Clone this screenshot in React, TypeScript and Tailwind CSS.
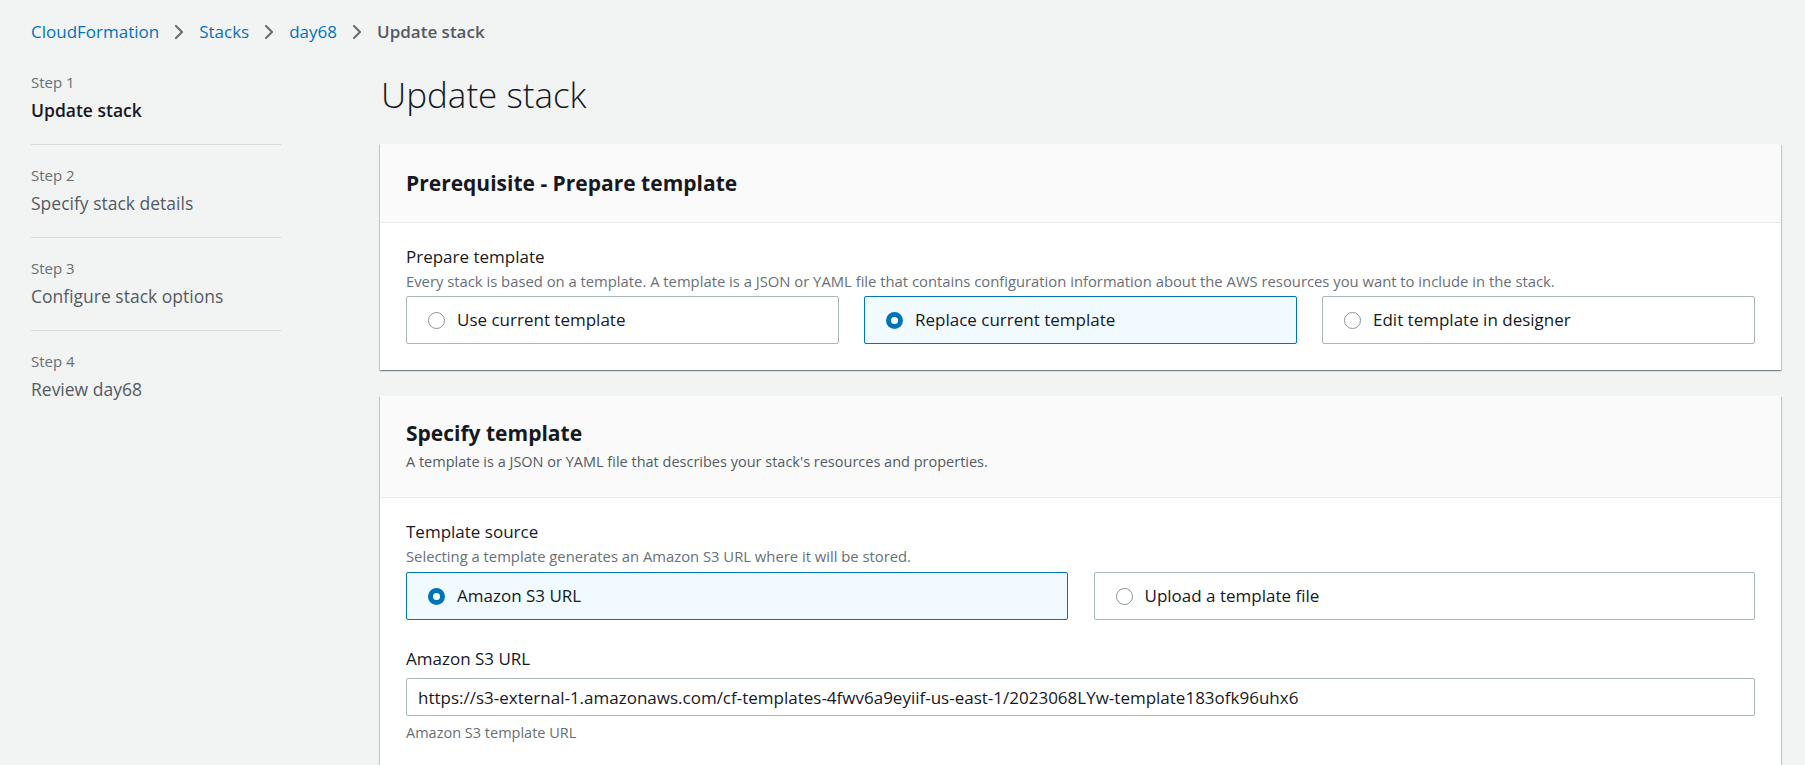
const steps = [
  { label: "Step 1", title: "Update stack", active: true },
  { label: "Step 2", title: "Specify stack details", active: false },
  { label: "Step 3", title: "Configure stack options", active: false },
  { label: "Step 4", title: "Review day68", active: false },
];

const Chevron = () => (
  <svg width="12" height="18" viewBox="0 0 12 18" className="mx-[14px] shrink-0">
    <path d="M3 3l6 6-6 6" fill="none" stroke="#687078" strokeWidth="2.2" strokeLinecap="round" strokeLinejoin="round" />
  </svg>
);

const Radio = ({ checked }: { checked: boolean }) =>
  checked ? (
    <span className="w-[17px] h-[17px] rounded-full bg-[#0073bb] flex items-center justify-center shrink-0">
      <span className="w-[7px] h-[7px] rounded-full bg-white"></span>
    </span>
  ) : (
    <span className="w-[17px] h-[17px] rounded-full border-[1.5px] border-[#879596] bg-white shrink-0"></span>
  );

const Tile = ({ label, checked }: { label: string; checked: boolean }) => (
  <div
    className={`h-[48px] rounded-[2px] border flex items-center pl-[21px] gap-[12px] ${
      checked ? "border-[#0073bb] bg-[#f1faff]" : "border-[#aab7b8] bg-white"
    }`}
  >
    <Radio checked={checked} />
    <span className="text-[17px] text-[#16191f]">{label}</span>
  </div>
);

const cardShadow =
  "shadow-[0_1px_1px_0_rgba(0,28,36,0.3),1px_1px_1px_0_rgba(0,28,36,0.15),-1px_1px_1px_0_rgba(0,28,36,0.15)]";

const App = () => {
  return (
    <div
      className="w-full h-[765px] overflow-hidden bg-[#f2f3f3] text-[#16191f]"
      style={{ fontFamily: "'Open Sans', 'Noto Sans', sans-serif" }}
    >
      {/* breadcrumbs */}
      <div className="flex items-center pl-[31px] pt-[20px] h-[44px] text-[17px] leading-[24px]">
        <span className="text-[#0073bb]">CloudFormation</span>
        <Chevron />
        <span className="text-[#0073bb]">Stacks</span>
        <Chevron />
        <span className="text-[#0073bb]">day68</span>
        <Chevron />
        <span className="text-[#545b64] font-semibold">Update stack</span>
      </div>

      <div className="flex pt-[8px]">
        {/* wizard steps */}
        <div className="w-[250px] ml-[31px] shrink-0">
          {steps.map((s, i) => (
            <div
              key={s.label}
              className={`pt-[20px] pb-[22px] ${i < steps.length - 1 ? "border-b border-[#d5dbdb]" : ""}`}
            >
              <div className="text-[15px] leading-[20px] text-[#687078]">{s.label}</div>
              <div
                className={`mt-[6px] text-[17.5px] leading-[24px] ${
                  s.active ? "font-semibold text-[#16191f]" : "text-[#545b64]"
                }`}
              >
                {s.title}
              </div>
            </div>
          ))}
        </div>

        {/* main column */}
        <div className="flex-1 ml-[99px] mr-[24px]">
          <h1 className="text-[35px] leading-[40px] font-light pt-[23px] mb-[29px] pl-[1px]">Update stack</h1>

          <div className={`bg-white ${cardShadow}`}>
            <div className="h-[79px] flex items-center px-[26px] bg-[#fafafa] border-b border-[#eaeded]">
              <h2 className="text-[21px] leading-[28px] font-bold">Prerequisite - Prepare template</h2>
            </div>
            <div className="px-[26px] pt-[22px] pb-[26px]">
              <div className="text-[17px] leading-[24px]">Prepare template</div>
              <div className="text-[14.8px] leading-[20px] text-[#687078] mt-[2px]">
                Every stack is based on a template. A template is a JSON or YAML file that contains configuration
                information about the AWS resources you want to include in the stack.
              </div>
              <div className="grid grid-cols-3 gap-[25px] mt-[5px]">
                <Tile label="Use current template" checked={false} />
                <Tile label="Replace current template" checked={true} />
                <Tile label="Edit template in designer" checked={false} />
              </div>
            </div>
          </div>

          <div className={`bg-white mt-[26px] ${cardShadow}`}>
            <div className="px-[26px] pt-[23px] pb-[25px] bg-[#fafafa] border-b border-[#eaeded]">
              <h2 className="text-[21px] leading-[28px] font-bold">Specify template</h2>
              <div className="text-[14.5px] leading-[20px] text-[#545b64] mt-[5px]">
                A template is a JSON or YAML file that describes your stack's resources and properties.
              </div>
            </div>
            <div className="px-[26px] pt-[22px] pb-[40px]">
              <div className="text-[17px] leading-[24px]">Template source</div>
              <div className="text-[14.8px] leading-[20px] text-[#687078] mt-[2px]">
                Selecting a template generates an Amazon S3 URL where it will be stored.
              </div>
              <div className="grid grid-cols-2 gap-[26px] mt-[6px]">
                <Tile label="Amazon S3 URL" checked={true} />
                <Tile label="Upload a template file" checked={false} />
              </div>

              <div className="text-[17px] leading-[24px] mt-[27px]">Amazon S3 URL</div>
              <input
                className="mt-[7px] w-full h-[38px] border border-[#aab7b8] rounded-[2px] px-[11px] text-[17px] text-[#16191f] outline-none bg-white"
                type="text"
                defaultValue="https://s3-external-1.amazonaws.com/cf-templates-4fwv6a9eyiif-us-east-1/2023068LYw-template183ofk96uhx6"
              />
              <div className="text-[14.5px] leading-[20px] text-[#687078] mt-[7px]">Amazon S3 template URL</div>
            </div>
          </div>
        </div>
      </div>
    </div>
  );
};

export default App;
